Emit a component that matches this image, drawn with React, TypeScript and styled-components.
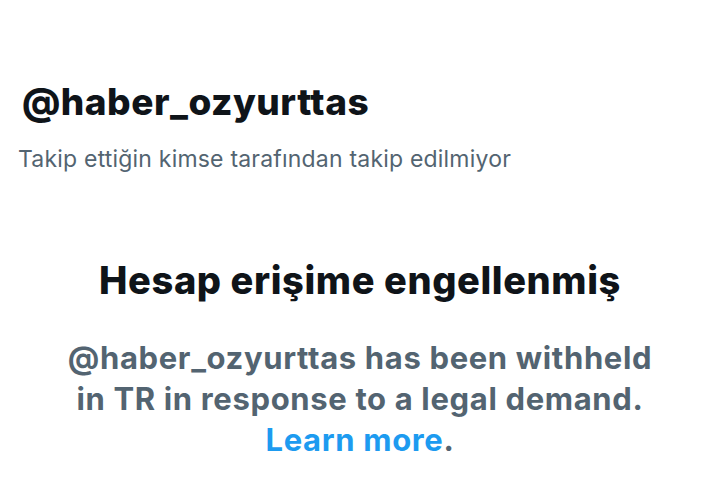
import React from 'react';
import styled, {createGlobalStyle} from 'styled-components';

const GlobalStyle = createGlobalStyle`
  html, body {
    margin: 0;
    padding: 0;
    background: #ffffff;
  }
  body {
    font-family: Inter, "Noto Sans", "Liberation Sans", sans-serif;
  }
`

export default function App() {
    return (
        <>
            <GlobalStyle/>
            <Page>
                <Header>
                    <Handle>@haber_ozyurttas</Handle>
                    <Followers>Takip ettiğin kimse tarafından takip edilmiyor</Followers>
                </Header>
                <Notice>
                    <Title>Hesap erişime engellenmiş</Title>
                    <Message>
                        @haber_ozyurttas has been withheld<br/>
                        in TR in response to a legal demand.<br/>
                        <MoreLink href="#">Learn more</MoreLink>.
                    </Message>
                </Notice>
            </Page>
        </>
    );
}

const Page = styled.div`
  width: 720px;
  height: 480px;
  overflow: hidden;
  display: flex;
  flex-direction: column;
`

const Header = styled.div`
  padding: 78px 0 0 20px;
  display: flex;
  flex-direction: column;
  gap: 19px;
`

const Handle = styled.h1`
  margin: 0 0 0 2px;
  font-size: 37px;
  font-weight: 800;
  line-height: 48px;
  color: #0f1419;
  letter-spacing: 0.5px;
`

const Followers = styled.div`
  font-size: 23px;
  line-height: 28px;
  color: #536471;
  margin-left: -2px;
  letter-spacing: 0.2px;
`

const Notice = styled.div`
  margin-top: 84px;
  display: flex;
  flex-direction: column;
  align-items: center;
  text-align: center;
`

const Title = styled.h2`
  margin: 0;
  font-size: 38px;
  font-weight: 800;
  line-height: 46px;
  color: #0f1419;
  letter-spacing: 0.6px;
`

const Message = styled.p`
  margin: 34px 0 0;
  font-size: 31px;
  font-weight: 700;
  line-height: 41px;
  color: #536471;
  letter-spacing: 0.65px;
`

const MoreLink = styled.a`
  color: #1d9bf0;
  text-decoration: none;
`
